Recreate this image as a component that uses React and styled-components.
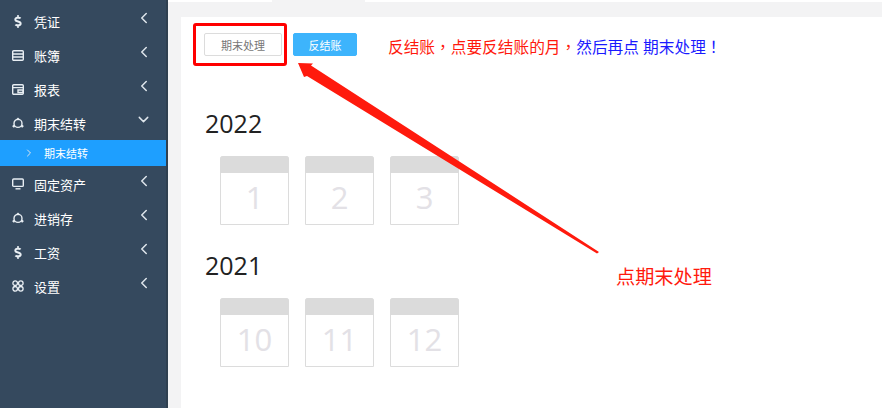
import React from 'react';
import styled, { createGlobalStyle } from 'styled-components';
import { FaDollarSign } from 'react-icons/fa';
import { FiChevronLeft, FiChevronDown, FiChevronRight } from 'react-icons/fi';

const GlobalStyle = createGlobalStyle`
  html, body {
    margin: 0;
    padding: 0;
    background: #fff;
    font-family: "Open Sans", "Noto Sans CJK SC", sans-serif;
  }
`;

const Page = styled.div`
  position: relative;
  display: flex;
  width: 882px;
  height: 408px;
  overflow: hidden;
`;

const Sidebar = styled.nav`
  width: 168px;
  flex: none;
  padding-top: 4px;
  box-sizing: border-box;
  background: #35495e;
  border-right: 2px solid #2f4050;
`;

const MenuRow = styled.div`
  display: flex;
  align-items: center;
  box-sizing: border-box;
  height: 34px;
  padding: 0 13px 0 12px;
  color: #fff;
  font-size: 13px;
`;

const SubRow = styled.div`
  display: flex;
  align-items: center;
  height: 26px;
  margin-bottom: 1px;
  padding-left: 23px;
  background: #1e9fff;
  color: #fff;
  font-size: 11px;
`;

const MenuIcon = styled.span`
  display: flex;
  justify-content: center;
  width: 12px;
  margin-right: 10px;
`;

const MenuLabel = styled.span`
  flex: 1;
`;

const Caret = styled.span`
  display: flex;
  margin-top: -6px;
  color: #dfe6ec;
`;

const DownCaret = styled(Caret)`
  margin-top: -8px;
  margin-right: 1px;
`;

const SubCaret = styled.span`
  display: flex;
  width: 21px;
  color: #dfe6ec;
`;

const Main = styled.main`
  flex: 1;
  display: flex;
  flex-direction: column;
  background: #f3f3f4;
`;

const TabStrip = styled.div`
  height: 2px;
  background: #fff;
`;

const Tab = styled.div`
  width: 93px;
  height: 2px;
  margin-left: 104px;
  background: #f3f3f4;
`;

const Body = styled.div`
  flex: 1;
  display: flex;
  padding: 15px 0 0 13px;
`;

const Content = styled.div`
  flex: 1;
  background: #fff;
  padding: 16px 0 0 24px;
`;

const Toolbar = styled.div`
  display: flex;
  align-items: center;
  height: 23px;
  margin-left: -1px;
`;

const Button = styled.button`
  box-sizing: border-box;
  height: 23px;
  width: ${(p) => p.$width}px;
  margin-right: ${(p) => p.$gap}px;
  padding: 0;
  border-radius: 2px;
  border: 1px solid ${(p) => (p.$primary ? '#3db4fc' : '#dcdcdc')};
  background: ${(p) => (p.$primary ? '#3db4fc' : '#fff')};
  color: ${(p) => (p.$primary ? '#fff' : '#777')};
  font-family: inherit;
  font-size: 11px;
`;

const Note = styled.span`
  padding-top: 4px;
  font-size: 15.7px;
  white-space: pre;
  color: ${(p) => p.$color};
`;

// full-width punctuation sits centred in its cell in the reference
const Punct = styled.span`
  font-family: "Noto Sans CJK TC", sans-serif;
`;

const YearBlock = styled.section`
  margin-top: ${(p) => p.$top}px;
`;

const Year = styled.h2`
  margin: 0;
  font-weight: 400;
  font-size: 25px;
  line-height: 32px;
  color: #222;
`;

const MonthGrid = styled.div`
  display: flex;
  gap: 16px;
  margin: 17px 0 0 15px;
`;

const Month = styled.div`
  box-sizing: border-box;
  width: 69px;
  height: 69px;
  border: 1px solid #dcdcdc;
  border-radius: 3px 3px 0 0;
  text-align: center;
  color: #e3e1e6;
  font-size: 31px;
  line-height: 49px;

  &::before {
    content: '';
    display: block;
    height: 17px;
    margin: -1px -1px 0;
    border-radius: 3px 3px 0 0;
    background: #dbdbdb;
  }
`;

const RedFrame = styled.div`
  position: absolute;
  left: 193px;
  top: 23px;
  width: 94px;
  height: 43px;
  box-sizing: border-box;
  border: 3px solid #f00;
  border-radius: 3px;
`;

const ArrowLayer = styled.svg`
  position: absolute;
  left: 0;
  top: 0;
  pointer-events: none;
`;

const Callout = styled.div`
  position: absolute;
  left: 616px;
  top: 264px;
  color: #ff1a0d;
  font-size: 19.2px;
  line-height: 26px;
`;

const BookIcon = () => (
  <svg width="12" height="11" viewBox="0 0 12 11" fill="none" stroke="#e8eef3" strokeWidth="1.4">
    <rect x="0.7" y="0.7" width="10.6" height="9.6" rx="1" />
    <path d="M1 4h10M1 7h10" />
  </svg>
);

const ReportIcon = () => (
  <svg width="12" height="11" viewBox="0 0 12 11" fill="none" stroke="#e8eef3" strokeWidth="1.4">
    <rect x="0.7" y="0.7" width="10.6" height="9.6" rx="1" />
    <path d="M1 3.6h10M6 6h5v2.5H6z" />
  </svg>
);

const RingIcon = () => (
  <svg width="12" height="12" viewBox="0 0 12 12" fill="none" stroke="#e8eef3" strokeWidth="1.4">
    <circle cx="6" cy="6.4" r="4" />
    <circle cx="6" cy="2" r="1" fill="#e8eef3" strokeWidth="0.5" />
    <circle cx="1.8" cy="9.2" r="1.1" fill="#e8eef3" strokeWidth="0.5" />
    <circle cx="10.2" cy="9.2" r="1.1" fill="#e8eef3" strokeWidth="0.5" />
  </svg>
);

const MonitorIcon = () => (
  <svg width="12" height="12" viewBox="0 0 12 12" fill="none" stroke="#e8eef3" strokeWidth="1.4">
    <rect x="0.7" y="1" width="10.6" height="7.4" rx="1" />
    <path d="M3.5 10.8h5" />
  </svg>
);

const CloverIcon = () => (
  <svg width="12" height="12" viewBox="0 0 12 12" fill="none" stroke="#e8eef3" strokeWidth="1.3">
    <circle cx="3.2" cy="3.2" r="2.3" />
    <circle cx="8.8" cy="3.2" r="2.3" />
    <circle cx="3.2" cy="8.8" r="2.3" />
    <circle cx="8.8" cy="8.8" r="2.3" />
  </svg>
);

const DollarIcon = () => <FaDollarSign size={13} color="#e8eef3" />;

const menuBefore = [
  { label: '凭证', icon: <DollarIcon /> },
  { label: '账簿', icon: <BookIcon /> },
  { label: '报表', icon: <ReportIcon /> },
];

const menuAfter = [
  { label: '固定资产', icon: <MonitorIcon /> },
  { label: '进销存', icon: <RingIcon /> },
  { label: '工资', icon: <DollarIcon /> },
  { label: '设置', icon: <CloverIcon /> },
];

const years = [
  { year: '2022', top: 51, months: [1, 2, 3] },
  { year: '2021', top: 24, months: [10, 11, 12] },
];

const Item = ({ label, icon, open }) => (
  <MenuRow>
    <MenuIcon>{icon}</MenuIcon>
    <MenuLabel>{label}</MenuLabel>
    {open ? (
      <DownCaret>
        <FiChevronDown size={17} />
      </DownCaret>
    ) : (
      <Caret>
        <FiChevronLeft size={18} />
      </Caret>
    )}
  </MenuRow>
);

const App = () => (
  <Page>
    <GlobalStyle />
    <Sidebar>
      {menuBefore.map((m) => (
        <Item key={m.label} {...m} />
      ))}
      <Item label="期末结转" icon={<RingIcon />} open />
      <SubRow>
        <SubCaret>
          <FiChevronRight size={12} />
        </SubCaret>
        期末结转
      </SubRow>
      {menuAfter.map((m) => (
        <Item key={m.label} {...m} />
      ))}
    </Sidebar>
    <Main>
      <TabStrip>
        <Tab />
      </TabStrip>
      <Body>
        <Content>
          <Toolbar>
            <Button $width={78} $gap={11}>期末处理</Button>
            <Button $primary $width={64} $gap={31}>反结账</Button>
            <Note $color="#ff1a0d">
              反结账<Punct>，</Punct>点要反结账的月<Punct>，</Punct>
            </Note>
            <Note $color="#1a1aff">
              然后再点 期末处理<Punct>！</Punct>
            </Note>
          </Toolbar>
          {years.map((y) => (
            <YearBlock key={y.year} $top={y.top}>
              <Year>{y.year}</Year>
              <MonthGrid>
                {y.months.map((n) => (
                  <Month key={n}>{n}</Month>
                ))}
              </MonthGrid>
            </YearBlock>
          ))}
        </Content>
      </Body>
    </Main>
    <RedFrame />
    <ArrowLayer width="882" height="408" viewBox="0 0 882 408">
      <polygon points="298,63 313,63.5 311,65.5 599,252 597,253.5 307,76 304,77" fill="#ff1a0d" />
    </ArrowLayer>
    <Callout>点期末处理</Callout>
  </Page>
);

export default App;
